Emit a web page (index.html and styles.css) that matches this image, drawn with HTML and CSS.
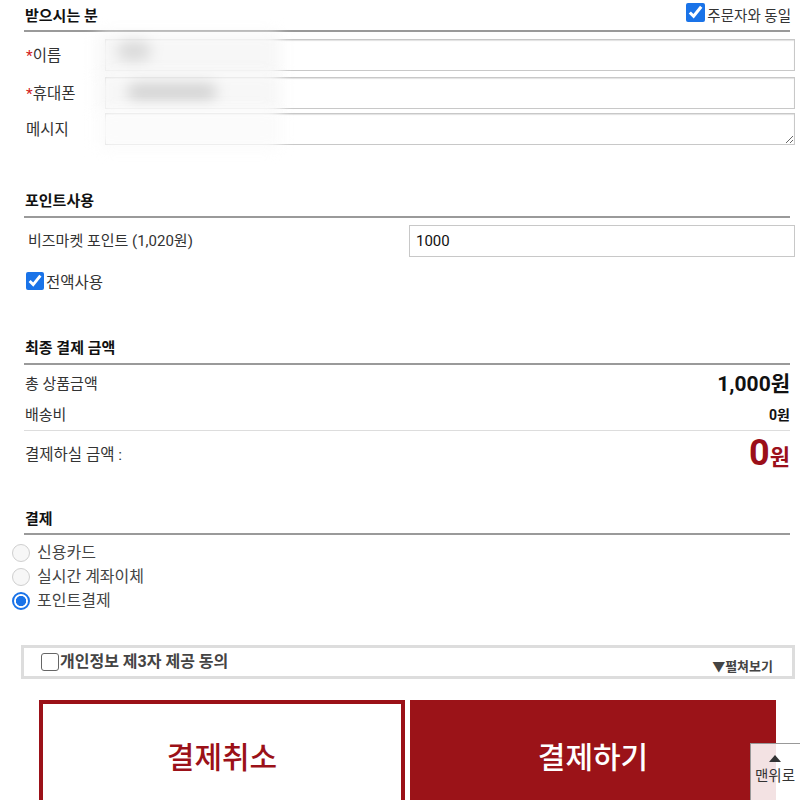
FILE: index.html
```html
<!DOCTYPE html>
<html lang="ko">
<head>
<meta charset="utf-8">
<link rel="stylesheet" href="styles.css">
</head>
<body>
<div class="wrap">
  <section class="sec sec-recv">
    <div class="sec-head">
      <h2>받으시는 분</h2>
      <label class="same"><input type="checkbox" checked><span>주문자와 동일</span></label>
    </div>
    <div class="frow f1">
      <span class="flabel"><em>*</em>이름</span>
      <div class="field"><input type="text"><span class="blur b1"></span></div>
    </div>
    <div class="frow f2">
      <span class="flabel"><em>*</em>휴대폰</span>
      <div class="field"><input type="text"><span class="blur b2"></span></div>
    </div>
    <div class="frow f3">
      <span class="flabel">메시지</span>
      <div class="field"><textarea></textarea><span class="blur b3"></span></div>
    </div>
  </section>

  <section class="sec sec-point">
    <div class="sec-head"><h2>포인트사용</h2></div>
    <div class="prow">
      <span class="plabel">비즈마켓 포인트 (1,020원)</span>
      <input class="pinput" type="text" value="1000">
    </div>
    <label class="alluse"><input type="checkbox" checked><span>전액사용</span></label>
  </section>

  <section class="sec sec-total">
    <div class="sec-head"><h2>최종 결제 금액</h2></div>
    <div class="trow r1"><span>총 상품금액</span><b class="big">1,000원</b></div>
    <div class="trow r2"><span>배송비</span><b class="small">0원</b></div>
    <div class="trow r3"><span>결제하실 금액 :</span><b class="final"><span class="n">0</span><span class="w">원</span></b></div>
  </section>

  <section class="sec sec-pay">
    <div class="sec-head"><h2>결제</h2></div>
    <div class="radios">
      <label><input type="radio" name="pay"><span>신용카드</span></label>
      <label><input type="radio" name="pay"><span>실시간 계좌이체</span></label>
      <label><input type="radio" name="pay" checked><span>포인트결제</span></label>
    </div>
  </section>
</div>

<div class="agree">
  <label class="agree-l"><span class="box"></span><span>개인정보 제3자 제공 동의</span></label>
  <span class="more">▼펼쳐보기</span>
</div>

<div class="btns">
  <button class="cancel">결제취소</button>
  <button class="pay">결제하기</button>
</div>

<div class="totop">
  <span class="tri"></span>
  <span>맨위로</span>
</div>
</body>
</html>
```

FILE: styles.css
```css
html, body { margin: 0; padding: 0; background: #fff; }
body {
  font-family: "Roboto", "Noto Sans CJK KR", sans-serif;
  color: #333;
  font-size: 15px;
  width: 800px;
  height: 800px;
  overflow: hidden;
  position: relative;
}
.wrap { padding: 0 5px 0 24px; }
.sec-head {
  display: flex;
  align-items: flex-end;
  justify-content: space-between;
  border-bottom: 2px solid #9a9a9a;
  margin-right: 5px;
  padding-bottom: 5px;
}
.sec-head h2 {
  margin: 0;
  font-size: 15px;
  font-weight: 700;
  color: #111;
  line-height: 20px;
  padding-left: 1px;
}
.sec-recv .sec-head { padding-top: 6px; padding-bottom: 4px; }
.same { display: flex; align-items: center; font-size: 14.5px; color: #333; margin-right: -1px; line-height: 20px; }
.same input { width: 19px; height: 19px; margin: 0 2px 0 0; accent-color: #1a73e8; position: relative; top: -4px; }
.same span { position: relative; top: 1px; }

.frow { display: flex; align-items: center; height: 32px; }
.f1 { margin-top: 7px; }
.f2 { margin-top: 6px; }
.f3 { margin-top: 4px; }
.flabel { box-sizing: border-box; width: 81px; padding-left: 2px; font-size: 15.5px; line-height: 22px; color: #333; position: relative; top: 1px; }
.flabel em { font-style: normal; color: #d21c1c; }
.field { flex: 1; position: relative; height: 32px; }
.field input, .field textarea {
  box-sizing: border-box;
  width: 100%;
  height: 32px;
  border: 1px solid #c8c8c8;
  box-shadow: inset 0 1px 1px #e2e2e2;
  margin: 0;
  padding: 0 6px;
  font: inherit;
  display: block;
  resize: vertical;
}
.blur {
  position: absolute;
  background: #f7f7f7;
  filter: blur(7px);
  border-radius: 6px;
}
.b1 { left: -8px; top: -6px; width: 184px; height: 44px; }
.b2 { left: -8px; top: -4px; width: 184px; height: 40px; }
.b3 { left: -8px; top: -4px; width: 184px; height: 40px; background: #fbfbfb; }
.b1::after, .b2::after {
  content: "";
  position: absolute;
  background: #dadada;
  border-radius: 12px;
}
.b1::after { left: 20px; top: 8px; width: 34px; height: 20px; }
.b2::after { left: 30px; top: 10px; width: 90px; height: 18px; background: #d4d4d4; }

.sec-point { margin-top: 46px; }
.prow { display: flex; align-items: center; margin-top: 7px; height: 32px; }
.plabel { box-sizing: border-box; width: 385px; padding-left: 4px; font-size: 15px; line-height: 22px; color: #333; }
.pinput {
  box-sizing: border-box;
  flex: 1;
  min-width: 0;
  height: 32px;
  border: 1px solid #c8c8c8;
  margin: 0;
  padding: 0 6px;
  font: 15px "Roboto", sans-serif;
  color: #111;
}
.alluse { display: flex; align-items: center; height: 22px; margin-top: 13px; font-size: 15.5px; color: #333; }
.alluse input { width: 18px; height: 18px; margin: 0 2px 0 2px; accent-color: #1a73e8; }

.sec-total { margin-top: 46px; }
.trow { display: flex; justify-content: space-between; align-items: center; margin-right: 5px; color: #333; }
.trow > span { font-size: 15px; padding-left: 1px; line-height: 22px; }
.r1 { height: 32px; margin-top: 3px; }
.r2 { height: 30px; border-bottom: 1px solid #ddd; }
.r3 { height: 48px; }
.big { font-size: 21px; color: #111; font-weight: 700; line-height: 28px; }
.small { font-size: 14px; color: #111; font-weight: 700; line-height: 20px; }
.final { color: #9b0f1a; font-weight: 700; display: flex; align-items: baseline; line-height: 40px; }
.final .n { font-size: 36px; }
.final .w { font-size: 22px; }
.r3 > span { font-size: 15.5px; }

.sec-pay { margin-top: 30px; }
.sec-pay .sec-head { padding-bottom: 4px; }
.radios { display: flex; flex-direction: column; margin-left: -12px; margin-top: 6px; }
.radios label { display: flex; align-items: center; height: 24px; font-size: 16px; line-height: 22px; color: #444; }
.radios input {
  appearance: none;
  -webkit-appearance: none;
  box-sizing: border-box;
  width: 18px; height: 18px;
  margin: 0 7px 0 0;
  border-radius: 50%;
  border: 1px solid #cfcfcf;
  background: #f7f7f7;
}
.radios input:checked {
  border: 2px solid #1a73e8;
  background: radial-gradient(circle, #1a73e8 0 4.8px, #fff 5.4px);
}

.agree {
  box-sizing: border-box;
  margin: 32px 5px 0 21px;
  height: 34px;
  border: 3px solid #ddd;
  display: flex;
  align-items: center;
  justify-content: space-between;
  padding: 0 19px 0 17px;
}
.agree-l { display: flex; align-items: center; font-weight: 700; font-size: 16px; color: #444; line-height: 22px; }
.box {
  box-sizing: border-box;
  width: 18px; height: 18px;
  border: 1.5px solid #666;
  border-radius: 3px;
  margin-right: 1px;
  display: inline-block;
}
.more { font-size: 13px; font-weight: 700; color: #444; position: relative; top: 3px; }

.btns { display: flex; gap: 5px; margin: 21px 0 0 39px; }
.btns button {
  width: 366px;
  height: 120px;
  box-sizing: border-box;
  font-family: "Noto Sans CJK KR", sans-serif;
  font-size: 30px;
  font-weight: 500;
  padding: 0 0 10px;
  margin: 0;
}
.cancel { background: #fff; color: #9b1118; border: 4px solid #9b1118; }
.pay { background: #9b1318; color: #fff; border: 0; }

.totop {
  position: absolute;
  left: 750px;
  top: 743px;
  width: 54px;
  height: 60px;
  box-sizing: border-box;
  border: 1px solid #999;
  background: rgba(255,255,255,0.88);
  display: flex;
  flex-direction: column;
  align-items: center;
  padding-top: 11px;
  padding-right: 4px;
  font-size: 14.5px;
  line-height: 18px;
  color: #333;
}
.tri {
  width: 0; height: 0;
  border-left: 6px solid transparent;
  border-right: 6px solid transparent;
  border-bottom: 7px solid #333;
  margin-bottom: 6px;
}
```
